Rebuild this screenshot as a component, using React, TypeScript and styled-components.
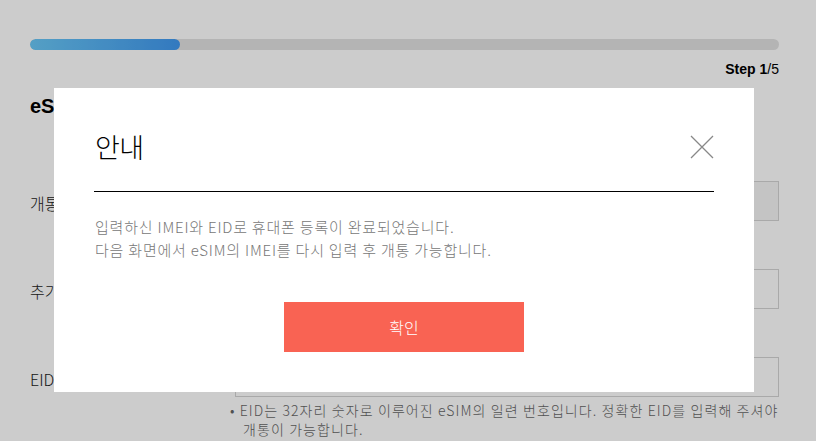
import styled, { createGlobalStyle } from "styled-components";

const GlobalStyle = createGlobalStyle`
  html, body {
    margin: 0;
    padding: 0;
    background: #ffffff;
    font-family: "Noto Sans CJK KR", "Noto Sans", sans-serif;
    color: #222;
  }
`;

const Page = styled.div`
  width: 816px;
  height: 441px;
  overflow: hidden;
  box-sizing: border-box;
  padding: 39px 37px 0 30px;
`;

const ProgressTrack = styled.div`
  height: 11px;
  border-radius: 6px;
  background: #e2e2e2;
  overflow: hidden;
`;

const ProgressFill = styled.div`
  height: 100%;
  border-radius: 6px;
  background: linear-gradient(90deg, #6ac8f7, #4098ef);
`;

const StepText = styled.div`
  margin-top: 11px;
  text-align: right;
  font-family: "Liberation Sans", Arial, sans-serif;
  font-size: 14px;
  line-height: 16px;
  color: #000;

  b {
    font-weight: 700;
  }
`;

const Heading = styled.h2`
  margin: 17px 0 0;
  font-family: "Liberation Sans", Arial, sans-serif;
  font-size: 20px;
  font-weight: 700;
  line-height: 24px;
  color: #000;
`;

const Form = styled.div`
  margin-top: 63px;
  display: flex;
  flex-direction: column;
  gap: 48px;
`;

const Row = styled.div`
  display: grid;
  grid-template-columns: 205px 1fr;
  align-items: center;
`;

const Label = styled.div`
  font-size: 16px;
  font-weight: 300;
  color: #222;
  padding-top: 4px;
`;

const Input = styled.div<{ $disabled?: boolean }>`
  height: 40px;
  box-sizing: border-box;
  border: 1px solid #d4d4d4;
  background: ${(p) => (p.$disabled ? "#f5f5f5" : "#ffffff")};
`;

const Note = styled.p`
  margin: 4px 0 0 200px;
  padding-left: 13px;
  text-indent: -13px;
  font-size: 14px;
  font-weight: 300;
  letter-spacing: 1.1px;
  word-break: keep-all;
  line-height: 19px;
  color: #666;
`;

const Overlay = styled.div`
  position: fixed;
  inset: 0;
  background: rgba(0, 0, 0, 0.2);
  padding: 88px 0 0 54px;
`;

const ModalBox = styled.div`
  width: 700px;
  height: 304px;
  box-sizing: border-box;
  background: #ffffff;
  padding: 44px 40px 0 40px;
`;

const ModalHeader = styled.div`
  display: flex;
  align-items: flex-start;
  justify-content: space-between;
  height: 59px;
  padding-left: 1px;
  border-bottom: 1px solid #000;
`;

const ModalTitle = styled.h3`
  margin: 0;
  font-size: 27px;
  line-height: 30px;
  font-weight: 300;
  color: #000;
  letter-spacing: -0.5px;
`;

const CloseButton = styled.button`
  border: 0;
  background: none;
  padding: 0;
  width: 24px;
  height: 24px;
  margin-top: 3px;
  cursor: pointer;
  display: flex;
`;

const ModalBody = styled.div`
  padding: 23px 0 0 1px;
  font-size: 15px;
  font-weight: 300;
  letter-spacing: 0.8px;
  line-height: 23px;
  color: #777;
`;

const ButtonRow = styled.div`
  display: flex;
  justify-content: center;
  padding-top: 41px;
`;

const ConfirmButton = styled.button`
  width: 240px;
  height: 50px;
  border: 0;
  background: #f96353;
  color: #fff;
  font-family: "Noto Sans CJK KR", sans-serif;
  font-size: 16px;
  font-weight: 300;
  cursor: pointer;
`;

const rows = [
  { label: "개통 번호", disabled: true },
  { label: "추가 정보", disabled: false },
  { label: "EID", disabled: false },
];

export default function App() {
  const step = 1;
  const total = 5;

  return (
    <>
      <GlobalStyle />
      <Page>
        <ProgressTrack>
          <ProgressFill style={{ width: `${(step / total) * 100}%` }} />
        </ProgressTrack>
        <StepText>
          <b>Step {step}</b>/{total}
        </StepText>
        <Heading>eSIM 개통 정보 입력</Heading>
        <Form>
          {rows.map((r) => (
            <Row key={r.label}>
              <Label>{r.label}</Label>
              <Input $disabled={r.disabled} />
            </Row>
          ))}
        </Form>
        <Note>
          • EID는 32자리 숫자로 이루어진 eSIM의 일련 번호입니다. 정확한 EID를 입력해 주셔야
          개통이 가능합니다.
        </Note>
      </Page>
      <Overlay>
        <ModalBox>
          <ModalHeader>
            <ModalTitle>안내</ModalTitle>
            <CloseButton aria-label="닫기">
              <svg width="24" height="24" viewBox="0 0 24 24">
                <path d="M1 1L23 23M23 1L1 23" stroke="#888" strokeWidth="1.3" />
              </svg>
            </CloseButton>
          </ModalHeader>
          <ModalBody>
            입력하신 IMEI와 EID로 휴대폰 등록이 완료되었습니다.
            <br />
            다음 화면에서 eSIM의 IMEI를 다시 입력 후 개통 가능합니다.
          </ModalBody>
          <ButtonRow>
            <ConfirmButton>확인</ConfirmButton>
          </ButtonRow>
        </ModalBox>
      </Overlay>
    </>
  );
}
